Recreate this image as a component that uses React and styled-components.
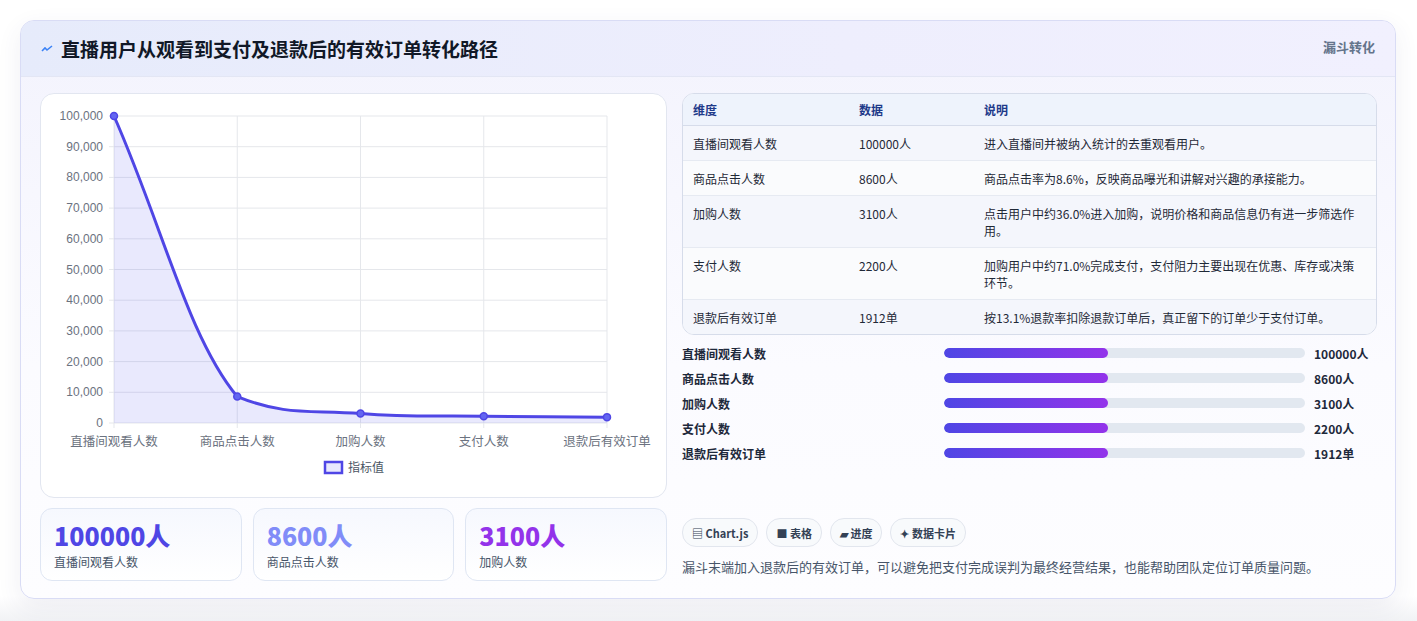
import React from 'react';
import styled, { createGlobalStyle } from 'styled-components';

const Global = createGlobalStyle`
  body { margin: 0; background: #fff; font-family: "Noto Sans CJK SC", "Noto Sans", sans-serif; color: #1e293b; }
`;

const Page = styled.div`
  padding: 20px 21px 22px 20px;
  height: 621px;
  box-sizing: border-box;
  background: linear-gradient(180deg, #fff 0%, #fff 96%, #f1f2f5 100%);
`;

const Card = styled.div`
  border: 1px solid #d9dcf5;
  border-radius: 14px;
  background: linear-gradient(180deg, #f3f3fd 0%, #fbfbff 60%, #fdfdff 100%);
  box-shadow: 0 8px 24px rgba(60, 60, 120, 0.08);
  overflow: hidden;
  height: 579px;
  box-sizing: border-box;
`;

const Header = styled.div`
  height: 55px;
  display: flex;
  align-items: center;
  justify-content: space-between;
  padding: 0 20px 0 20px;
  background: linear-gradient(90deg, #e6ebfb 0%, #eeeefd 60%, #f1f0fe 100%);
  border-bottom: 1px solid #e3e6f4;
`;

const Title = styled.h1`
  margin: 0;
  font-size: 19px;
  font-weight: 700;
  color: #111827;
  display: flex;
  align-items: center;
  gap: 8px;
`;

const Tag = styled.span`
  font-size: 13px;
  font-weight: 700;
  color: #64748b;
  align-self: flex-start;
  margin-top: 16px;
`;

const Body = styled.div`
  display: grid;
  grid-template-columns: 627px 695px;
  gap: 15px;
  padding: 16px 19px 0 19px;
`;

const Col = styled.div`
  display: flex;
  flex-direction: column;
`;

const ChartPanel = styled.div`
  height: 403px;
  border: 1px solid #e2e6f0;
  border-radius: 14px;
  background: #fff;
`;

const Stats = styled.div`
  display: grid;
  grid-template-columns: repeat(3, 1fr);
  gap: 11px;
  margin-top: 10px;
`;

const Stat = styled.div`
  height: 73px;
  box-sizing: border-box;
  border: 1px solid #dfe6f3;
  border-radius: 12px;
  background: linear-gradient(180deg, #f6f8fe, #fff);
  padding: 10px 13px;
`;

const StatValue = styled.div`
  font-size: 25px;
  font-weight: 800;
  color: ${p => p.$c};
  line-height: 32px;
`;

const StatLabel = styled.div`
  font-size: 12px;
  color: #475569;
  margin-top: 2px;
`;

const TableWrap = styled.div`
  border: 1px solid #d6dcea;
  border-radius: 12px;
  overflow: hidden;
  background: #fff;
`;

const Table = styled.table`
  width: 100%;
  border-collapse: collapse;
  font-size: 12px;
  td, th { text-align: left; padding: 0 10px; vertical-align: top; }
  th { color: #1e3a8a; font-weight: 700; background: #eef3fc; height: 31px; vertical-align: middle; border-bottom: 1px solid #d6dcea; }
  td { color: #1f2937; padding-top: 9px; padding-bottom: 8px; line-height: 17px; border-bottom: 1px solid #e6eaf2; }
  tr:last-child td { border-bottom: none; }
  tbody tr:nth-child(odd) td { background: #f4f6fc; }
  tbody tr:nth-child(even) td { background: #fafbfd; }
`;

const Bars = styled.div`
  display: flex;
  flex-direction: column;
  gap: 7px;
  margin-top: 9px;
`;

const BarRow = styled.div`
  display: grid;
  grid-template-columns: 262px 370px 1fr;
  align-items: center;
  font-size: 12px;
  font-weight: 600;
  height: 18px;
`;

const Track = styled.div`
  height: 10px;
  border-radius: 5px;
  background: #e2e8f0;
  margin-right: 9px;
  overflow: hidden;
`;

const Fill = styled.div`
  height: 100%;
  border-radius: 5px;
  background: linear-gradient(90deg, #4f46e5, #9333ea);
`;

const Chips = styled.div`
  display: flex;
  gap: 8px;
  margin-top: 56px;
`;

const Chip = styled.span`
  font-size: 11px;
  font-weight: 700;
  color: #334155;
  padding: 0 9px;
  height: 27px;
  display: inline-flex;
  align-items: center;
  border: 1px solid #e2e6ee;
  border-radius: 14px;
  background: #f8fafc;
`;

const Note = styled.p`
  margin: 10px 0 0;
  font-size: 13px;
  color: #475569;
`;

const rows = [
  ['直播间观看人数', '100000人', '进入直播间并被纳入统计的去重观看用户。'],
  ['商品点击人数', '8600人', '商品点击率为8.6%，反映商品曝光和讲解对兴趣的承接能力。'],
  ['加购人数', '3100人', '点击用户中约36.0%进入加购，说明价格和商品信息仍有进一步筛选作用。'],
  ['支付人数', '2200人', '加购用户中约71.0%完成支付，支付阻力主要出现在优惠、库存或决策环节。'],
  ['退款后有效订单', '1912单', '按13.1%退款率扣除退款订单后，真正留下的订单少于支付订单。'],
];

const values = [100000, 8600, 3100, 2200, 1912];

function Chart() {
  const x0 = 73, x1 = 566, y0 = 22, y1 = 329;
  const xs = values.map((_, i) => x0 + (i * (x1 - x0)) / 4);
  const ys = values.map(v => y1 - (v / 100000) * (y1 - y0));
  const clamp = v => Math.min(v, ys[ys.length - 1] + 0.5 > y1 ? y1 : v);
  let d = `M${xs[0]},${ys[0]}`;
  for (let i = 0; i < 4; i++) {
    const dx = (xs[i + 1] - xs[i]) * 0.4;
    const prev = i > 0 ? (ys[i + 1] - ys[i - 1]) / 2 : ys[i + 1] - ys[i];
    const next = i < 3 ? (ys[i + 2] - ys[i]) / 2 : ys[i + 1] - ys[i];
    const lo = Math.max(ys[i], ys[i + 1]) + 3;
    const c1 = Math.min(clamp(ys[i] + prev * 0.4), lo);
    const c2 = Math.min(clamp(ys[i + 1] - next * 0.4), lo);
    d += ` C${xs[i] + dx},${c1} ${xs[i + 1] - dx},${c2} ${xs[i + 1]},${ys[i + 1]}`;
  }
  const labels = ['直播间观看人数', '商品点击人数', '加购人数', '支付人数', '退款后有效订单'];
  return (
    <svg width="627" height="403" style={{ display: 'block' }}>
      {Array.from({ length: 11 }, (_, i) => {
        const y = y1 - (i * (y1 - y0)) / 10;
        return (
          <g key={i}>
            <line x1={x0 - 5} x2={x1} y1={y} y2={y} stroke="#e5e7eb" />
            <text x={x0 - 11} y={y + 4} fontSize="12" fill="#6b7280" textAnchor="end" fontFamily="Liberation Sans, sans-serif">
              {(i * 10000).toLocaleString('en-US')}
            </text>
          </g>
        );
      })}
      {xs.map((x, i) => (
        <g key={i}>
          <line x1={x} x2={x} y1={y0} y2={y1 + 5} stroke="#e5e7eb" />
          <text x={x} y={y1 + 23} fontSize="12.5" fill="#6b7280" textAnchor="middle">{labels[i]}</text>
        </g>
      ))}
      <path d={`${d} L${x1},${y1} L${x0},${y1} Z`} fill="rgba(99,102,241,0.14)" />
      <path d={d} fill="none" stroke="#4f46e5" strokeWidth="3" />
      {xs.map((x, i) => (
        <circle key={i} cx={x} cy={ys[i]} r="3.5" fill="#6366f1" stroke="#4f46e5" strokeWidth="1.5" />
      ))}
      <rect x="284" y="368" width="17" height="11" fill="rgba(99,102,241,0.15)" stroke="#4f46e5" strokeWidth="2.5" />
      <text x="307" y="378" fontSize="12" fill="#4b5563">指标值</text>
    </svg>
  );
}

export default function App() {
  return (
    <Page>
      <Global />
      <Card>
        <Header>
          <Title>
            <svg width="12" height="12" viewBox="0 0 12 12">
              <path d="M1 8 L4 5 L6 7 L11 3" stroke="#3b82f6" strokeWidth="1.6" fill="none" />
            </svg>
            直播用户从观看到支付及退款后的有效订单转化路径
          </Title>
          <Tag>漏斗转化</Tag>
        </Header>
        <Body>
          <Col>
            <ChartPanel><Chart /></ChartPanel>
            <Stats>
              <Stat><StatValue $c="#4f46e5">100000人</StatValue><StatLabel>直播间观看人数</StatLabel></Stat>
              <Stat><StatValue $c="#818cf8">8600人</StatValue><StatLabel>商品点击人数</StatLabel></Stat>
              <Stat><StatValue $c="#9333ea">3100人</StatValue><StatLabel>加购人数</StatLabel></Stat>
            </Stats>
          </Col>
          <Col>
            <TableWrap>
              <Table>
                <colgroup><col width="166" /><col width="125" /><col /></colgroup>
                <thead><tr><th>维度</th><th>数据</th><th>说明</th></tr></thead>
                <tbody>
                  {rows.map(r => (
                    <tr key={r[0]}><td>{r[0]}</td><td>{r[1]}</td><td>{r[2]}</td></tr>
                  ))}
                </tbody>
              </Table>
            </TableWrap>
            <Bars>
              {rows.map(r => (
                <BarRow key={r[0]}>
                  <span>{r[0]}</span>
                  <Track><Fill style={{ width: '45.4%' }} /></Track>
                  <span>{r[1]}</span>
                </BarRow>
              ))}
            </Bars>
            <Chips>
              <Chip>▤ Chart.js</Chip>
              <Chip>■ 表格</Chip>
              <Chip>▰ 进度</Chip>
              <Chip>✦ 数据卡片</Chip>
            </Chips>
            <Note>漏斗末端加入退款后的有效订单，可以避免把支付完成误判为最终经营结果，也能帮助团队定位订单质量问题。</Note>
          </Col>
        </Body>
      </Card>
    </Page>
  );
}
